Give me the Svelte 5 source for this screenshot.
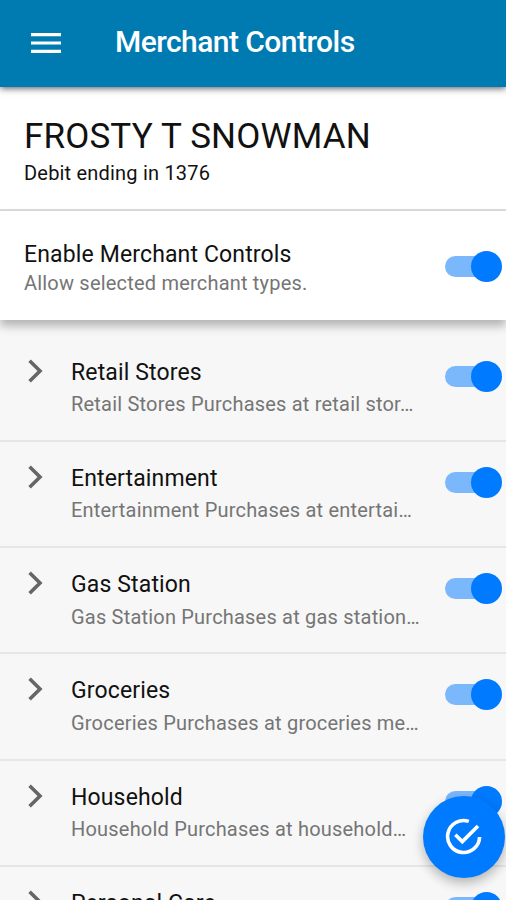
<script lang="ts">
  type Merchant = { name: string; summary: string; enabled: boolean }

  let controlsEnabled = $state(true)

  let merchants: Merchant[] = $state([
    { name: 'Retail Stores', summary: 'Retail Stores Purchases at retail stor…', enabled: true },
    { name: 'Entertainment', summary: 'Entertainment Purchases at entertai…', enabled: true },
    { name: 'Gas Station', summary: 'Gas Station Purchases at gas station…', enabled: true },
    { name: 'Groceries', summary: 'Groceries Purchases at groceries me…', enabled: true },
    { name: 'Household', summary: 'Household Purchases at household…', enabled: true },
    { name: 'Personal Care', summary: '', enabled: true },
  ])
</script>

{#snippet toggle(on: boolean, label: string, flip: () => void)}
  <button class="toggle" class:on role="switch" aria-checked={on} aria-label={label} onclick={flip}>
    <span class="knob"></span>
  </button>
{/snippet}

<div class="screen">
  <header>
    <button class="menu" aria-label="Menu">
      <svg width="30" height="20" viewBox="0 0 30 20">
        <path d="M0 1.7h30M0 10h30M0 18.3h30" />
      </svg>
    </button>
    <h1>Merchant Controls</h1>
  </header>

  <section class="card">
    <h2>FROSTY T SNOWMAN</h2>
    <p>Debit ending in 1376</p>
  </section>

  <section class="enable">
    <div>
      <h3>Enable Merchant Controls</h3>
      <p>Allow selected merchant types.</p>
    </div>
    {@render toggle(controlsEnabled, 'Enable Merchant Controls', () => (controlsEnabled = !controlsEnabled))}
  </section>

  <ul>
    {#each merchants as merchant}
      <li>
        <svg class="chevron" width="16" height="24" viewBox="0 0 16 24">
          <path d="M1.6 1.8 12 12 1.6 22.2" />
        </svg>
        <div class="text">
          <h3>{merchant.name}</h3>
          {#if merchant.summary}
            <p>{merchant.summary}</p>
          {/if}
        </div>
        {@render toggle(merchant.enabled, merchant.name, () => (merchant.enabled = !merchant.enabled))}
      </li>
    {/each}
  </ul>

  <button class="fab" aria-label="Save">
    <svg width="38" height="38" viewBox="0 0 38 38">
      <path d="M23.8 3.4A16 16 0 1 0 34.6 19" />
      <path d="M10.3 16.8 17.3 23.6 33 7.9" />
    </svg>
  </button>
</div>

<style>
  :global(body) {
    margin: 0;
    overflow: hidden;
  }
  .screen {
    position: relative;
    display: flex;
    flex-direction: column;
    height: 900px;
    overflow: hidden;
    background: #f7f7f7;
    color: #111;
    font-family: Roboto, sans-serif;
  }
  h1,
  h2,
  h3,
  p,
  ul {
    margin: 0;
    padding: 0;
    font-weight: 400;
    white-space: nowrap;
  }
  button {
    border: none;
    padding: 0;
    background: none;
    cursor: pointer;
  }
  svg {
    display: block;
    fill: none;
  }
  header {
    display: flex;
    align-items: center;
    flex: none;
    box-sizing: border-box;
    height: 87px;
    padding: 0 0 1px 31px;
    background: #007bb1;
    box-shadow: 0 1px 7px rgb(0 0 0 / 0.7);
    z-index: 2;
  }
  .menu svg {
    stroke: #fff;
    stroke-width: 3.2;
  }
  h1 {
    margin: -2px 0 0 54px;
    color: #fff;
    font-size: 30px;
    font-weight: 500;
    line-height: 36px;
    letter-spacing: -0.55px;
  }
  .card {
    flex: none;
    box-sizing: border-box;
    height: 124px;
    padding: 30px 24px 0;
    border-bottom: 2px solid #dcdcdc;
    background: #fff;
  }
  h2 {
    font-size: 35px;
    line-height: 40px;
    letter-spacing: 0.15px;
  }
  .card p {
    font-size: 20px;
    line-height: 24px;
    letter-spacing: 0.2px;
    margin-top: 4px;
  }
  .enable {
    display: flex;
    justify-content: space-between;
    flex: none;
    box-sizing: border-box;
    height: 109px;
    padding: 30px 4px 0 24px;
    background: #fff;
    box-shadow: 0 6px 9px rgb(0 0 0 / 0.28);
    z-index: 1;
  }
  h3 {
    font-size: 23px;
    line-height: 28px;
    letter-spacing: 0.14px;
  }
  .enable p,
  .text p {
    color: #757575;
    font-size: 20px;
    line-height: 24px;
    letter-spacing: 0.2px;
  }
  .enable p {
    margin-top: 2px;
  }
  .enable .toggle {
    margin-top: 14.5px;
  }
  ul {
    flex: none;
    padding-top: 15.6px;
    list-style: none;
  }
  li {
    display: flex;
    box-sizing: border-box;
    height: 106.3px;
    padding: 23px 4px 0 28px;
    border-bottom: 2px solid #e6e6e6;
  }
  .chevron {
    flex: none;
    margin: 0 27px 0 0;
    stroke: #666;
    stroke-width: 3.6;
  }
  .text {
    flex: 1;
    min-width: 0;
  }
  .text p {
    margin-top: 5.6px;
  }
  li .toggle {
    margin-top: 7px;
  }
  .toggle {
    display: flex;
    align-items: center;
    flex: none;
    width: 57px;
    height: 21px;
    border-radius: 11px;
    background: #c8c8c8;
  }
  .toggle.on {
    justify-content: flex-end;
    background: linear-gradient(90deg, #7ab7fb 48px, transparent 48px);
  }
  .knob {
    width: 31px;
    height: 31px;
    flex: none;
    border-radius: 50%;
    background: #fff;
  }
  .on .knob {
    background: #007aff;
  }
  .fab {
    position: absolute;
    right: 1px;
    bottom: 22px;
    display: flex;
    justify-content: center;
    align-items: center;
    width: 82px;
    height: 82px;
    border-radius: 50%;
    background: #007aff;
    box-shadow: 0 5px 12px rgb(0 0 0 / 0.28);
    z-index: 3;
  }
  .fab svg {
    stroke: #fff;
    stroke-width: 3.6;
  }
</style>
